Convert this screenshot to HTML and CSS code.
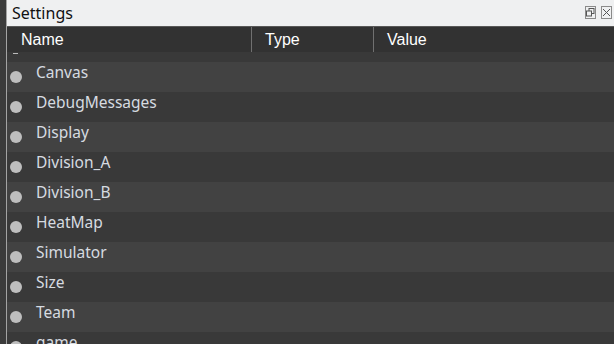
FILE: index.html
```html
<!DOCTYPE html>
<html lang="en">
<head>
  <meta charset="UTF-8">
  <meta name="viewport" content="width=device-width, initial-scale=1.0">
  <title>Settings</title>
  <link rel="stylesheet" href="styles.css">
</head>
<body>
  <div class="dock-edge"></div>
  <div class="panel">
    <div class="titlebar">
      <span class="title">Settings</span>
      <div class="title-buttons">
        <span class="tbtn">
          <svg width="9" height="9" viewBox="0 0 9 9">
            <rect x="3" y="0.5" width="5" height="5" fill="none" stroke="#555" stroke-width="1"/>
            <rect x="0.5" y="3" width="5" height="5" fill="#eff0f1" stroke="#555" stroke-width="1"/>
          </svg>
        </span>
        <span class="tbtn">
          <svg width="9" height="9" viewBox="0 0 9 9">
            <path d="M1 1 L8 8 M8 1 L1 8" stroke="#555" stroke-width="1"/>
          </svg>
        </span>
      </div>
    </div>
    <div class="header">
      <div class="col col-name">Name</div>
      <div class="col col-type">Type</div>
      <div class="col col-value">Value</div>
    </div>
    <div class="rows">
      <div class="row row-partial"><span class="dash"></span></div>
      <div class="row light"><span class="dot"></span><span class="label">Canvas</span></div>
      <div class="row"><span class="dot"></span><span class="label">DebugMessages</span></div>
      <div class="row light"><span class="dot"></span><span class="label">Display</span></div>
      <div class="row"><span class="dot"></span><span class="label">Division_A</span></div>
      <div class="row light"><span class="dot"></span><span class="label">Division_B</span></div>
      <div class="row"><span class="dot"></span><span class="label">HeatMap</span></div>
      <div class="row light"><span class="dot"></span><span class="label">Simulator</span></div>
      <div class="row"><span class="dot"></span><span class="label">Size</span></div>
      <div class="row light"><span class="dot"></span><span class="label">Team</span></div>
      <div class="row"><span class="dot"></span><span class="label">game</span></div>
    </div>
  </div>
</body>
</html>
```

FILE: styles.css
```css
body {
  margin: 0;
  padding: 0;
  background-color: #3a3a3a;
  display: flex;
  height: 344px;
  overflow: hidden;
}
.dock-edge {
  width: 6px;
  background-color: #3b3b3b;
  flex-shrink: 0;
}
.panel {
  flex: 1;
  display: flex;
  flex-direction: column;
  border-left: 1px solid #a3a3a3;
  overflow: hidden;
}
.titlebar {
  height: 26px;
  background-color: #eff0f1;
  border-bottom: 1px solid #585858;
  display: flex;
  align-items: center;
  justify-content: space-between;
  flex-shrink: 0;
}
.title {
  font-family: "Noto Sans", sans-serif;
  font-size: 16px;
  color: #111;
  padding-left: 5px;
  line-height: 26px;
}
.title-buttons {
  display: flex;
  gap: 5px;
  padding-right: 2px;
  margin-top: -2px;
}
.tbtn {
  width: 9px;
  height: 11px;
  border: 1px solid #8a8a8a;
  display: flex;
  align-items: center;
  justify-content: center;
}
.header {
  height: 25px;
  background-color: #323232;
  display: flex;
  flex-shrink: 0;
}
.col {
  font-family: "Liberation Sans", Arial, sans-serif;
  font-size: 16px;
  color: #fff;
  line-height: 25px;
  padding-left: 13px;
  box-sizing: border-box;
}
.col-name {
  width: 245px;
  padding-left: 14px;
  border-right: 1px solid #707070;
}
.col-type {
  width: 122px;
  border-right: 1px solid #707070;
}
.col-value {
  flex: 1;
}
.rows {
  display: flex;
  flex-direction: column;
}
.row {
  height: 30px;
  background-color: #393939;
  display: flex;
  align-items: flex-start;
  flex-shrink: 0;
}
.row.light {
  background-color: #424242;
}
.row-partial {
  height: 10px;
  position: relative;
}
.dash {
  position: absolute;
  left: 6px;
  top: 1px;
  width: 5px;
  height: 1px;
  background-color: #bbb;
}
.dot {
  width: 12px;
  height: 12px;
  border-radius: 50%;
  background-color: #bebebe;
  margin-left: 3px;
  margin-top: 9px;
  flex-shrink: 0;
}
.label {
  font-family: "Noto Sans", sans-serif;
  font-size: 15.5px;
  color: #d6dbe0;
  line-height: 20px;
  margin-left: 14px;
}
```
